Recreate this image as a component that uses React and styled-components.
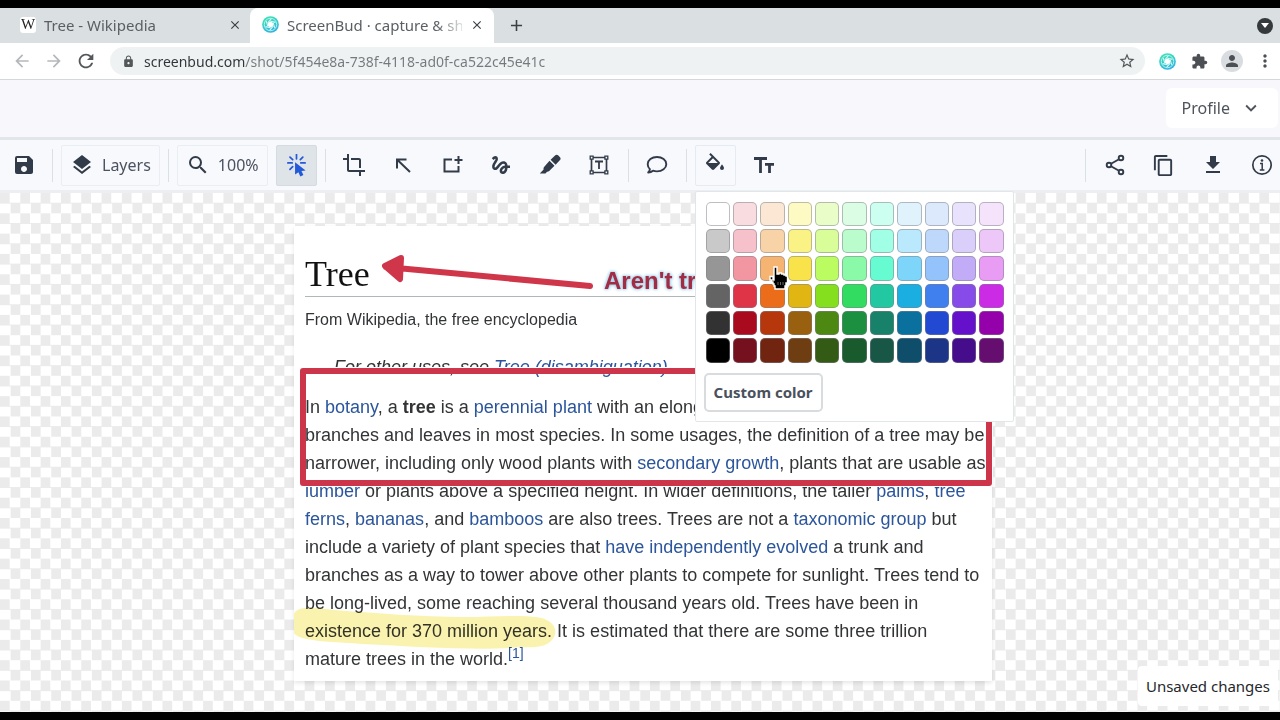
import styled, { createGlobalStyle, css } from "styled-components";
import {
  MdArrowBack,
  MdArrowForward,
  MdClose,
  MdAdd,
  MdContentCopy,
  MdCrop,
  MdDownload,
  MdExtension,
  MdGesture,
  MdKeyboardArrowDown,
  MdLayers,
  MdLock,
  MdMoreVert,
  MdPerson,
  MdRefresh,
  MdSave,
  MdSearch,
  MdStarBorder,
} from "react-icons/md";

const GlobalStyle = createGlobalStyle`
  * {
    box-sizing: border-box;
  }
  body {
    margin: 0;
    font-family: "Noto Sans", "Open Sans", sans-serif;
    color: #323b49;
  }
  button {
    font: inherit;
    color: inherit;
    background: none;
    border: none;
    padding: 0;
    cursor: pointer;
  }
`;

const Screen = styled.div`
  min-height: 100vh;
  padding: 8px 0;
  display: flex;
  flex-direction: column;
  background-color: #000;
  overflow: hidden;
`;

/* browser chrome */
const TabStrip = styled.div`
  height: 35px;
  display: flex;
  align-items: stretch;
  background-color: #dadfe1;
`;
const Tab = styled.div`
  width: ${(props) => (props.$active ? "244px" : "250px")};
  padding: 0 ${(props) => (props.$active ? "10px" : "8px")} 2px
    ${(props) => (props.$active ? "12px" : "20px")};
  display: flex;
  align-items: center;
  gap: 8px;
  font-size: 15px;
  color: #5a5f63;
  background-color: ${(props) => (props.$active ? "#fff" : "transparent")};
  border-radius: 8px 8px 0 0;
`;
const TabTitle = styled.span`
  flex: 1;
  min-width: 0;
  overflow: hidden;
  white-space: nowrap;
  ${(props) =>
    props.$fade &&
    css`
      mask-image: linear-gradient(to right, #000 85%, rgba(0, 0, 0, 0.2) 100%);
    `}
`;
const WikiBadge = styled.span`
  width: 16px;
  height: 16px;
  display: flex;
  align-items: center;
  justify-content: center;
  border-radius: 3px;
  background-color: #fff;
  color: #222;
  font: 15px "Liberation Serif", serif;
`;
const TabButton = styled.button`
  display: flex;
  align-items: center;
  justify-content: center;
  color: #3c4043;
`;
const NewTab = styled(TabButton)`
  width: 44px;
`;
const TabSearch = styled(TabButton)`
  width: 16px;
  height: 16px;
  margin: 10px 7px 0 auto;
  border-radius: 50%;
  background-color: #35393c;
`;
const AddressRow = styled.div`
  height: 37px;
  padding: 0 5px 0 10px;
  display: flex;
  align-items: center;
  gap: 8px;
  background-color: #fff;
  border-bottom: 1px solid #d5d8db;
`;
const NavButton = styled.button`
  width: 24px;
  height: 24px;
  display: flex;
  align-items: center;
  justify-content: center;
  color: ${(props) => (props.$dim ? "#b5b8ba" : "#53575a")};
`;
const AddressBar = styled.div`
  flex: 1;
  height: 28px;
  margin-left: 4px;
  padding: 0 9px 0 12px;
  display: flex;
  align-items: center;
  gap: 9px;
  border-radius: 14px;
  background-color: #eff2f3;
  color: #53575a;
`;
const AddressInput = styled.input`
  flex: 1;
  min-width: 0;
  padding: 0;
  border: none;
  outline: none;
  font: 14px "Noto Sans", sans-serif;
  color: transparent;
  background: linear-gradient(to right, #303437 101px, #74797d 101px);
  background-clip: text;
`;
const ChromeActions = styled.div`
  margin-left: 4px;
  display: flex;
  align-items: center;
  gap: 12px;
  color: #4c5055;
`;
const ChromeButton = styled.button`
  width: ${(props) => (props.$round ? "22px" : "20px")};
  height: 22px;
  display: flex;
  align-items: center;
  justify-content: center;
  border-radius: 50%;
  background-color: ${(props) => (props.$round ? "#d9dde2" : "transparent")};
`;

/* application bars */
const AppHeader = styled.header`
  height: 60px;
  padding: 8px 2px 0;
  display: flex;
  justify-content: flex-end;
  background-color: #f8f8fc;
  border-bottom: 3px solid #e2e6ea;
`;
const ProfileButton = styled.button`
  height: 40px;
  padding: 0 16px;
  display: flex;
  align-items: center;
  gap: 10px;
  border-radius: 6px;
  background-color: #fff;
  font-size: 16px;
  color: #4e535c;
`;
const Toolbar = styled.div`
  height: 53px;
  padding: 0 0 0 3px;
  display: flex;
  align-items: center;
  gap: 8px;
  background-color: #f8f9fc;
  border-bottom: 3px solid #eceef1;
`;
const ToolbarEnd = styled.div`
  margin: 0 -2px 0 auto;
  display: flex;
  align-items: center;
  gap: 8px;
`;
const Divider = styled.span`
  width: 1px;
  height: 33px;
  background-color: #dcdfe3;
`;
const ToolButton = styled.button`
  width: 41px;
  height: 41px;
  display: flex;
  align-items: center;
  justify-content: center;
  border-radius: 2px;
  border: 1px solid ${(props) => (props.$outlined ? "#e6ebf2" : "transparent")};
  ${(props) =>
    props.$selected &&
    css`
      color: #2459d8;
      background-color: #dfe4e9;
      border-color: #d5dbe1;
    `}
`;
const WideButton = styled(ToolButton)`
  width: auto;
  padding: 0 8px;
  gap: 8px;
  font-size: 16px;
  color: #4b5260;
  border-color: #eaedf1;

  svg {
    color: #323b49;
  }
`;
const PopoverAnchor = styled.div`
  position: relative;
`;

/* color picker */
const ColorPopover = styled.div`
  position: absolute;
  z-index: 5;
  top: 46px;
  left: 0;
  width: 319px;
  padding: 10px 8px 9px;
  background-color: #fff;
  border: 1px solid #e1e6ea;
  border-radius: 2px;
`;
const Swatches = styled.div`
  margin: 0 1px 0 2px;
  display: grid;
  grid-template-columns: repeat(11, 1fr);
  gap: 3px;
`;
const Swatch = styled.button`
  aspect-ratio: 1;
  border-radius: 5px;
  border: 1px solid rgba(125, 125, 135, 0.5);
  background-color: ${(props) => props.$color};
`;
const CustomColor = styled.button`
  height: 39px;
  margin-top: 10px;
  padding: 0 8px;
  border: 2px solid #d9dcdf;
  border-radius: 5px;
  font-size: 15px;
  font-weight: 700;
  color: #4a515d;
`;
const PointerIcon = styled.svg`
  position: absolute;
  top: 74px;
  left: 73px;
`;

/* canvas and screenshot */
const Canvas = styled.main`
  flex: 1;
  position: relative;
  padding: 33px 0 30px 6px;
  background: conic-gradient(
    #fff 25%,
    #ebebeb 25% 50%,
    #fff 50% 75%,
    #ebebeb 75%
  );
  background-size: calc(100vw / 63) calc(100vw / 63);
`;
const Article = styled.article`
  position: relative;
  max-width: 698px;
  margin: 0 auto;
  padding: 26px 11px 8px;
  background-color: #fff;
  box-shadow: 0 2px 4px rgba(0, 0, 0, 0.1);
  font: 16px "Liberation Sans", Arial, sans-serif;
  line-height: 28px;
  color: #333436;

  a {
    color: #2b559c;
    text-decoration: none;
  }
`;
const ArticleTitle = styled.h1`
  margin: 0;
  font: 36px "Liberation Serif", serif;
  line-height: 44px;
  color: #111;
  border-bottom: 1px solid #b3b6b9;
`;
const SiteSub = styled.p`
  margin: 9px 0 19px;
`;
const Hatnote = styled.p`
  margin: 0;
  padding-left: 29px;
  font-size: 18px;
  font-style: italic;
`;
const Body = styled.p`
  margin: 12px 0 0;
  font-size: 18px;
  white-space: nowrap;

  sup {
    font-size: 14px;
    line-height: 0;
  }
`;
const Drawing = styled.svg`
  position: absolute;
  top: 0;
  left: 0;
  width: 100%;
  height: 100%;
  pointer-events: none;
  mix-blend-mode: multiply;
`;
const RedBox = styled.div`
  position: absolute;
  top: 142px;
  left: 6px;
  right: 0;
  height: 118px;
  border: 6px solid #cd364a;
  border-radius: 3px;
  box-shadow: 0 0 0 1px #fff;
`;
const Annotation = styled.span`
  position: absolute;
  top: 41px;
  left: 310px;
  font-size: 24px;
  font-weight: bold;
  color: #a32c45;
  text-shadow: 0 0 3px #9cc6e0, 0 0 3px #b8dcf0, 0 0 5px #b8dcf0;
`;
const Status = styled.div`
  position: absolute;
  right: 2px;
  bottom: 6px;
  height: 40px;
  padding: 0 8px;
  display: flex;
  align-items: center;
  border-radius: 4px;
  background-color: #fff;
  font-size: 15px;
  color: #26282b;
`;

const colors = [
  "#ffffff #f9dce0 #fbe7d3 #fefac3 #e9fdc8 #dbfde3 #cdfff0 #e0f3fc #dce9fc #e9e2fd #f5e2fb",
  "#c9c9c9 #f7c1cb #f9d3a8 #fbf286 #d8fd99 #bafccb #a1ffe6 #bae8fd #bdd8fa #dacffb #edc7f8",
  "#969696 #f297a1 #f6b473 #f9e34b #bbfd61 #8bfaa8 #67fbd2 #7dd6f9 #94c2fa #c2acf7 #e99cf3",
  "#646464 #df3447 #eb6d19 #e2b612 #86df1e #31dc60 #22c8a2 #1baee0 #3f80ee #874bea #cc2be6",
  "#323232 #aa0a1d #b7370d #99610f #4d8912 #1c903e #178269 #0a719f #2149d1 #6511cc #9400aa",
  "#000000 #75111e #712410 #6e3d12 #345b16 #195b2c #185646 #0e4e6b #1d3586 #450c8b #650e70",
].flatMap((row) => row.split(" "));

const Icon = ({ children, size = 24 }) => (
  <svg
    width={size}
    height={size}
    viewBox="0 0 24 24"
    fill="none"
    stroke="currentColor"
    strokeWidth="2"
  >
    {children}
  </svg>
);

const ApertureIcon = ({ size = 17 }) => (
  <svg width={size} height={size} viewBox="0 0 24 24" fill="none">
    <defs>
      <linearGradient id="aperture" x1="0" y1="0" x2="0.4" y2="1">
        <stop offset="0" stopColor="#3fe8b0" />
        <stop offset="1" stopColor="#35b4e0" />
      </linearGradient>
    </defs>
    <circle cx="12" cy="12" r="11.800" fill="url(#aperture)" />
    <circle cx="12" cy="12" r="8.800" stroke="#c4f7ee" strokeWidth="1.200" />
    <path d="M12 7.700l3.800 2.100v4.400L12 16.300l-3.800-2.100V9.800z" fill="#fff" />
    <path
      d="M12 7.500l7 1.500M15.800 9.800l2.200 7M15.800 14.200l-5 6M12 16.500l-7-1.500M8.200 14.200L6 7.200M8.200 9.800l5-6"
      stroke="#d5fbf4"
      strokeWidth="1.500"
    />
  </svg>
);

const ClickIcon = () => (
  <Icon size={23}>
    <path
      d="M12 .5V5M3 9.300h4.500M16.500 9.300H21M5.200 3.200L8 5.800M18.600 3.200l-2.600 2.600M5.200 16L8 13.200"
      strokeWidth="1.800"
      strokeLinecap="round"
    />
    <path
      d="M10.500 8.500v13l3.500-2.500 2 4.500 3.200-1.500-2-4.200 4.300-.5z"
      fill="currentColor"
      stroke="none"
    />
  </Icon>
);

const ArrowIcon = () => (
  <Icon>
    <path d="M6 15.500V6.500h9.500M6.500 7L19 19" />
  </Icon>
);

const RectPlusIcon = () => (
  <Icon>
    <path d="M12 6.500H4.500v12h14V13M18.500 3v8M14.500 7h8" />
  </Icon>
);

const MarkerIcon = () => (
  <Icon>
    <g fill="currentColor" stroke="none">
      <path d="M17.300 2.300c.8-.8 2-.8 2.800 0l1.900 1.900c.8.8.8 2 0 2.800l-4.400 4.700-5-5z" />
      <path d="M11.500 7.700l5 5-5.300 5.300c-.6.600-1.400.8-2.200.7L7.500 20.500H1.800L5.600 16.500c-.2-1 0-2 .7-2.700z" />
    </g>
  </Icon>
);

const TextBoxIcon = () => (
  <Icon>
    <path
      d="M6 4.500h12M6 19.500h12M4.500 6v12M19.500 6v12"
      strokeWidth="1.700"
    />
    <path
      d="M3.200 3.200h2.900v2.900H3.200zM17.900 3.200h2.900v2.900h-2.900zM3.200 17.900h2.900v2.900H3.200zM17.900 17.900h2.900v2.900h-2.900z"
      strokeWidth="1.300"
    />
    <path d="M8 8.500h8M12 8.500v7.500" strokeWidth="1.800" />
  </Icon>
);

const BubbleIcon = () => (
  <Icon>
    <path
      d="M12 4c5.200 0 9.300 3.200 9.300 7.200s-4.100 7.200-9.300 7.200c-1.400 0-2.800-.2-4-.7-1.300 1.100-2.900 1.700-4.800 1.800 1-1 1.600-2.200 1.700-3.400-1.400-1.300-2.200-3-2.200-4.900C2.700 7.200 6.800 4 12 4z"
      strokeWidth="1.900"
      strokeLinejoin="round"
    />
  </Icon>
);

const FillIcon = () => (
  <Icon>
    <path
      d="M19 11.500s-2 2.170-2 3.500a2 2 0 0 0 4 0c0-1.330-2-3.500-2-3.500M5.210 10L10 5.210 14.790 10m1.770-1.060L7.620 0 6.210 1.410l2.380 2.380-5.150 5.150c-.59.56-.59 1.530 0 2.120l5.500 5.500c.29.290.680.440 1.060.440s.77-.15 1.060-.44l5.500-5.500c.59-.59.59-1.560 0-2.120z"
      fill="currentColor"
      stroke="none"
    />
  </Icon>
);

const TextSizeIcon = () => (
  <Icon>
    <path
      d="M2 5.500h13M8.500 5.500V20M13 11.300h9M17.500 11.300V20"
      strokeWidth="2.800"
    />
  </Icon>
);

const ShareIcon = () => (
  <Icon>
    <g strokeWidth="1.900">
      <circle cx="18" cy="5" r="2.300" />
      <circle cx="6" cy="12" r="2.300" />
      <circle cx="18" cy="19" r="2.300" />
      <path d="M8 10.800l8-4.600M8 13.200l8 4.600" />
    </g>
  </Icon>
);

const InfoIcon = () => (
  <Icon>
    <circle cx="12" cy="12" r="9.200" strokeWidth="1.700" />
    <path d="M10 10.500h2.200V17M9.800 17h4.600" strokeWidth="1.500" />
    <circle cx="12" cy="7.500" r="1.300" fill="currentColor" stroke="none" />
  </Icon>
);

const HandPointer = () => (
  <PointerIcon width="20" height="24" viewBox="0 0 20 24">
    <path
      d="M5 1h3v7h2V7h2.500v1H15v1h2v1h1.500v7H17v3h-1v3H6v-3H5v-2H4v-2H2.500v-2H1v-3.500h3V14h1z"
      fill="#000"
      stroke="#fff"
      strokeWidth="1.400"
    />
    <path d="M9 19v-3M11.500 19v-3M14 19v-3" stroke="#666" strokeWidth="1" />
  </PointerIcon>
);

const Browser = () => (
  <>
    <TabStrip>
      <Tab>
        <WikiBadge>W</WikiBadge>
        <TabTitle>Tree - Wikipedia</TabTitle>
        <TabButton aria-label="Close tab">
          <MdClose size={14} />
        </TabButton>
      </Tab>
      <Tab $active>
        <ApertureIcon />
        <TabTitle $fade>ScreenBud · capture &amp; share</TabTitle>
        <TabButton aria-label="Close tab">
          <MdClose size={14} />
        </TabButton>
      </Tab>
      <NewTab aria-label="New tab">
        <MdAdd size={19} />
      </NewTab>
      <TabSearch aria-label="Search tabs">
        <svg width="8" height="6" viewBox="0 0 8 6">
          <path d="M0 0h8L4 5z" fill="#fff" />
        </svg>
      </TabSearch>
    </TabStrip>
    <AddressRow>
      <NavButton $dim aria-label="Back">
        <MdArrowBack size={20} />
      </NavButton>
      <NavButton $dim aria-label="Forward">
        <MdArrowForward size={20} />
      </NavButton>
      <NavButton aria-label="Reload">
        <MdRefresh size={22} />
      </NavButton>
      <AddressBar>
        <MdLock size={13} />
        <AddressInput
          aria-label="Address"
          defaultValue="screenbud.com/shot/5f454e8a-738f-4118-ad0f-ca522c45e41c"
        />
        <MdStarBorder size={18} />
      </AddressBar>
      <ChromeActions>
        <ChromeButton aria-label="ScreenBud">
          <ApertureIcon />
        </ChromeButton>
        <ChromeButton aria-label="Extensions">
          <MdExtension size={17} />
        </ChromeButton>
        <ChromeButton $round aria-label="Account">
          <MdPerson size={18} />
        </ChromeButton>
        <ChromeButton aria-label="Menu">
          <MdMoreVert size={20} />
        </ChromeButton>
      </ChromeActions>
    </AddressRow>
  </>
);

const ColorPicker = () => (
  <ColorPopover>
    <Swatches>
      {colors.map((color) => (
        <Swatch key={color} $color={color} aria-label={color} />
      ))}
    </Swatches>
    <CustomColor>Custom color</CustomColor>
    <HandPointer />
  </ColorPopover>
);

const Tools = () => (
  <Toolbar>
    <ToolButton aria-label="Save">
      <MdSave size={24} />
    </ToolButton>
    <Divider />
    <WideButton>
      <MdLayers size={24} />
      Layers
    </WideButton>
    <Divider />
    <WideButton>
      <MdSearch size={24} />
      100%
    </WideButton>
    <ToolButton $selected aria-label="Select">
      <ClickIcon />
    </ToolButton>
    <Divider />
    <ToolButton aria-label="Crop">
      <MdCrop size={24} />
    </ToolButton>
    <ToolButton aria-label="Arrow">
      <ArrowIcon />
    </ToolButton>
    <ToolButton aria-label="Rectangle">
      <RectPlusIcon />
    </ToolButton>
    <ToolButton aria-label="Draw">
      <MdGesture size={24} />
    </ToolButton>
    <ToolButton aria-label="Marker">
      <MarkerIcon />
    </ToolButton>
    <ToolButton aria-label="Text">
      <TextBoxIcon />
    </ToolButton>
    <Divider />
    <ToolButton aria-label="Comment">
      <BubbleIcon />
    </ToolButton>
    <Divider />
    <PopoverAnchor>
      <ToolButton $outlined aria-label="Fill color">
        <FillIcon />
      </ToolButton>
      <ColorPicker />
    </PopoverAnchor>
    <ToolButton aria-label="Text size">
      <TextSizeIcon />
    </ToolButton>
    <ToolbarEnd>
      <Divider />
      <ToolButton aria-label="Share">
        <ShareIcon />
      </ToolButton>
      <ToolButton aria-label="Copy">
        <MdContentCopy size={23} />
      </ToolButton>
      <ToolButton aria-label="Download">
        <MdDownload size={24} />
      </ToolButton>
      <ToolButton aria-label="Info">
        <InfoIcon />
      </ToolButton>
    </ToolbarEnd>
  </Toolbar>
);

const Shot = () => (
  <Article>
    <ArticleTitle>Tree</ArticleTitle>
    <SiteSub>From Wikipedia, the free encyclopedia</SiteSub>
    <Hatnote>
      For other uses, see <a href="#disambiguation">Tree (disambiguation)</a>.
    </Hatnote>
    <Body>
      In <a href="#botany">botany</a>, a <b>tree</b> is a{" "}
      <a href="#perennial">perennial plant</a> with an elongated
      <br />
      branches and leaves in most species. In some usages, the definition of a
      tree may be
      <br />
      narrower, including only wood plants with{" "}
      <a href="#growth">secondary growth</a>, plants that are usable as
      <br />
      <a href="#lumber">lumber</a> or plants above a specified height. In wider
      definitions, the taller <a href="#palms">palms</a>,{" "}
      <a href="#ferns">tree</a>
      <br />
      <a href="#ferns">ferns</a>, <a href="#bananas">bananas</a>, and{" "}
      <a href="#bamboos">bamboos</a> are also trees. Trees are not a{" "}
      <a href="#taxonomic">taxonomic group</a> but
      <br />
      include a variety of plant species that{" "}
      <a href="#evolution">have independently evolved</a> a trunk and
      <br />
      branches as a way to tower above other plants to compete for sunlight.
      Trees tend to
      <br />
      be long-lived, some reaching several thousand years old. Trees have been
      in
      <br />
      existence for 370 million years. It is estimated that there are some
      three trillion
      <br />
      mature trees in the world.
      <sup>
        <a href="#cite-1">[1]</a>
      </sup>
    </Body>
    <RedBox />
    <Drawing>
      <path
        d="M2 385c6-5 20-3 38-1 40 3 90 7 130 7 30 0 60-3 78 1 13 4 17 14 10 22-5 6-14 8-30 7-40 4-100 0-160-3-25-2-45-2-60-6-9-3-12-9-11-15 1-6 2-9 5-12z"
        fill="#faf3b0"
      />
      <path
        d="M296 60L92 41M107 32L91 40l15 13z"
        fill="#d0364a"
        stroke="#d0364a"
        strokeWidth="6"
        strokeLinecap="round"
        strokeLinejoin="round"
      />
    </Drawing>
    <Annotation>Aren't trees</Annotation>
  </Article>
);

const App = () => {
  return (
    <>
      <GlobalStyle />
      <Screen>
        <Browser />
        <AppHeader>
          <ProfileButton>
            Profile
            <MdKeyboardArrowDown size={22} />
          </ProfileButton>
        </AppHeader>
        <Tools />
        <Canvas>
          <Shot />
          <Status role="status">Unsaved changes</Status>
        </Canvas>
      </Screen>
    </>
  );
};

export default App;
